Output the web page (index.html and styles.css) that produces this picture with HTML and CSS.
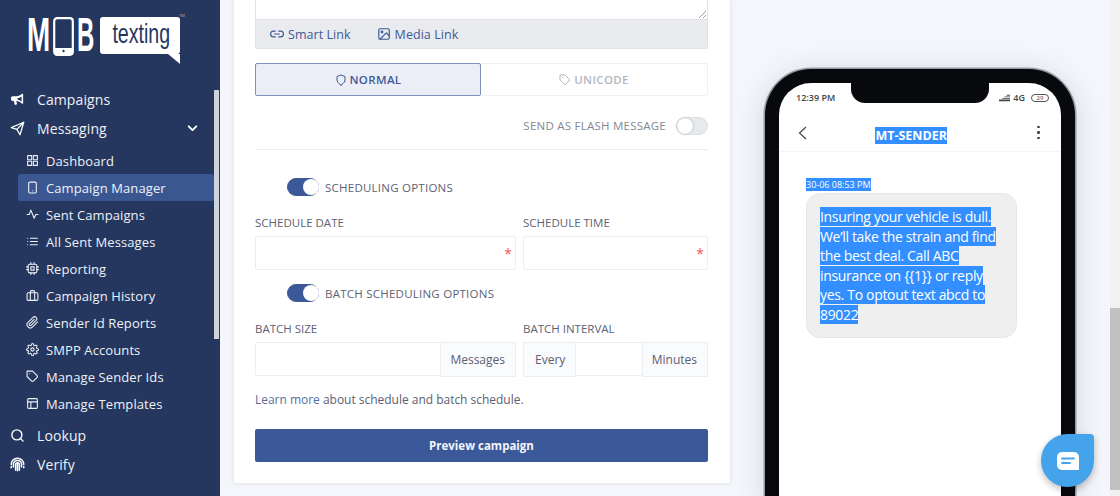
FILE: index.html
```html
<!DOCTYPE html>
<html lang="en">
<head>
    <meta charset="UTF-8">
    <meta name="viewport" content="width=device-width, initial-scale=1.0">
    <title>Campaign Manager</title>
    <link rel="stylesheet" href="styles.css">
</head>
<body>

    <aside class="sidebar">
        <div class="logo">
            <span class="logo-mob logo-m">M</span>
            <svg class="logo-phone" viewBox="0 0 21 39"><rect x="1.2" y="1.2" width="18.6" height="36.6" rx="3" fill="none" stroke="#fff" stroke-width="2.2"/><rect x="2" y="31" width="17" height="6" fill="#fff"/><circle cx="10.5" cy="34" r="1.2" fill="#25375f"/></svg>
            <span class="logo-mob logo-b">B</span>
            <span class="logo-bubble"><span class="logo-word">texting</span></span>
            <span class="logo-tm">TM</span>
        </div>

        <nav class="nav">
            <div class="side-thumb"></div>
            <a class="nav-top"><svg class="icon-top" viewBox="0 0 24 24" fill="#fff"><path d="M21 3.5v15l-1.5.4C17 16 13.5 14.7 10 14.4l1.4 5.3-3.6 1L6 14.2H4.500a3 3 0 0 1-3-3v-1.400a3 3 0 0 1 3-3H10c3.500-.3 7-1.700 9.500-4.500zM18.500 7c-2 1.500-4.300 2.500-6.500 3v2.300c2.200.4 4.500 1.300 6.500 2.800z"/></svg>Campaigns</a>
            <a class="nav-top nav-open"><svg class="icon-top" viewBox="0 0 24 24" fill="none" stroke="#fff" stroke-width="2" stroke-linejoin="round"><path d="M2 10.500 22 2l-6 20-5-8.500zM22 2 11 13.500"/></svg>Messaging<svg class="chevron" viewBox="0 0 24 24" fill="none" stroke="#fff" stroke-width="3.500" stroke-linecap="round" stroke-linejoin="round"><path d="m5 8 7 7 7-7"/></svg></a>

            <div class="nav-sub">
                <a><svg class="icon" viewBox="0 0 24 24"><rect x="3" y="3" width="7.500" height="7.500"/><rect x="13.500" y="3" width="7.500" height="7.500"/><rect x="13.500" y="13.500" width="7.500" height="7.500"/><rect x="3" y="13.500" width="7.500" height="7.500"/></svg>Dashboard</a>
                <a class="active"><svg class="icon" viewBox="0 0 24 24"><rect x="5" y="2" width="14" height="20" rx="2"/><path d="M12 18h.01"/></svg>Campaign Manager</a>
                <a><svg class="icon" viewBox="0 0 24 24"><path d="M22 12h-4l-3 7L9 4l-3 8H2"/></svg>Sent Campaigns</a>
                <a><svg class="icon" viewBox="0 0 24 24"><path d="M8 6h13M8 12h13M8 18h13M3 6h.01M3 12h.01M3 18h.01"/></svg>All Sent Messages</a>
                <a><svg class="icon" viewBox="0 0 24 24"><rect x="4" y="4" width="16" height="16" rx="3"/><rect x="9" y="9" width="6" height="6"/><path d="M9 1v3M15 1v3M9 20v3M15 20v3M20 9h3M20 14h3M1 9h3M1 14h3"/></svg>Reporting</a>
                <a><svg class="icon" viewBox="0 0 24 24"><rect x="2" y="7" width="20" height="14" rx="2"/><path d="M16 21V5a2 2 0 0 0-2-2h-4a2 2 0 0 0-2 2v16"/></svg>Campaign History</a>
                <a><svg class="icon" viewBox="0 0 24 24"><path d="M21.440 11.050l-9.190 9.190a6 6 0 0 1-8.490-8.490l9.190-9.190a4 4 0 0 1 5.660 5.660l-9.200 9.190a2 2 0 0 1-2.830-2.830l8.490-8.480"/></svg>Sender Id Reports</a>
                <a><svg class="icon" viewBox="0 0 24 24"><circle cx="12" cy="12" r="3"/><path d="M19.400 15a1.650 1.650 0 0 0 .33 1.820l.06.06a2 2 0 0 1 0 2.830 2 2 0 0 1-2.830 0l-.06-.06a1.650 1.650 0 0 0-1.820-.33 1.650 1.650 0 0 0-1 1.510V21a2 2 0 0 1-2 2 2 2 0 0 1-2-2v-.09A1.650 1.650 0 0 0 9 19.400a1.650 1.650 0 0 0-1.820.33l-.06.06a2 2 0 0 1-2.830 0 2 2 0 0 1 0-2.830l.06-.06a1.650 1.650 0 0 0 .33-1.820 1.650 1.650 0 0 0-1.510-1H3a2 2 0 0 1-2-2 2 2 0 0 1 2-2h.09A1.650 1.650 0 0 0 4.600 9a1.650 1.650 0 0 0-.33-1.820l-.06-.06a2 2 0 0 1 0-2.830 2 2 0 0 1 2.830 0l.06.06a1.650 1.650 0 0 0 1.820.33H9a1.650 1.650 0 0 0 1-1.510V3a2 2 0 0 1 2-2 2 2 0 0 1 2 2v.09a1.650 1.650 0 0 0 1 1.510 1.650 1.650 0 0 0 1.820-.33l.06-.06a2 2 0 0 1 2.830 0 2 2 0 0 1 0 2.830l-.06.06a1.650 1.650 0 0 0-.33 1.820V9a1.650 1.650 0 0 0 1.510 1H21a2 2 0 0 1 2 2 2 2 0 0 1-2 2h-.09a1.650 1.650 0 0 0-1.510 1z"/></svg>SMPP Accounts</a>
                <a><svg class="icon" viewBox="0 0 24 24"><path d="M20.590 13.410l-7.170 7.170a2 2 0 0 1-2.830 0L2 12V2h10l8.590 8.590a2 2 0 0 1 0 2.820z"/><path d="M7 7h.01"/></svg>Manage Sender Ids</a>
                <a><svg class="icon" viewBox="0 0 24 24"><rect x="3" y="3" width="18" height="18" rx="2"/><path d="M3 9h18M9 21V9"/></svg>Manage Templates</a>
            </div>

            <a class="nav-top nav-lookup"><svg class="icon-top" viewBox="0 0 24 24" fill="none" stroke="#fff" stroke-width="2.200" stroke-linecap="round"><circle cx="11" cy="11" r="8"/><path d="m21 21-4.350-4.350"/></svg>Lookup</a>
            <a class="nav-top"><svg class="icon-top" viewBox="0 0 24 24" fill="none" stroke="#fff" stroke-width="2.400" stroke-linecap="round"><path d="M2 12a10 10 0 0 1 20 0M5.500 16v-4a6.500 6.500 0 0 1 13 0v4M9 21v-9a3 3 0 0 1 6 0v9M12 22V11M2 15v2M22 15v2"/></svg>Verify</a>
        </nav>
    </aside>

    <main class="content">
        <section class="card">
            <div class="textarea-box">
                <div class="textarea-top">
                    <svg class="grip" viewBox="0 0 8 8" fill="none" stroke="#888" stroke-width=".8"><path d="M1 8 8 1M5 8l3-3"/></svg>
                </div>
                <div class="textarea-bar">
                    <a><svg class="bar-icon" viewBox="0 0 24 24"><path d="M15 7h3a5 5 0 0 1 0 10h-3M9 17H6A5 5 0 0 1 6 7h3M8 12h8"/></svg>Smart Link</a>
                    <a><svg class="bar-icon" viewBox="0 0 24 24"><rect x="3" y="3" width="18" height="18" rx="2"/><circle cx="8.500" cy="8.500" r="1.500"/><path d="m21 15-5-5L5 21"/></svg>Media Link</a>
                </div>
            </div>

            <div class="type-tabs">
                <div class="type-tab selected"><svg class="tab-icon" viewBox="0 0 24 24"><path d="M12 22s8-4 8-10V5l-8-3-8 3v7c0 6 8 10 8 10z"/></svg>NORMAL</div>
                <div class="type-tab"><svg class="tab-icon" viewBox="0 0 24 24"><path d="M20.590 13.410l-7.170 7.170a2 2 0 0 1-2.830 0L2 12V2h10l8.590 8.590a2 2 0 0 1 0 2.820z"/><path d="M7 7h.01"/></svg>UNICODE</div>
            </div>

            <div class="flash-row">
                <span>SEND AS FLASH MESSAGE</span>
                <span class="switch"></span>
            </div>

            <div class="switch-row first-switch">
                <span class="switch on"></span>
                <span>SCHEDULING OPTIONS</span>
            </div>

            <div class="form-row">
                <div class="col-left">
                    <label>SCHEDULE DATE</label>
                    <div class="field"><span class="req">*</span></div>
                </div>
                <div class="col-right">
                    <label>SCHEDULE TIME</label>
                    <div class="field"><span class="req">*</span></div>
                </div>
            </div>

            <div class="switch-row second-switch">
                <span class="switch on"></span>
                <span>BATCH SCHEDULING OPTIONS</span>
            </div>

            <div class="form-row">
                <div class="col-left">
                    <label>BATCH SIZE</label>
                    <div class="field group">
                        <div class="grow"></div>
                        <span class="addon addon-end">Messages</span>
                    </div>
                </div>
                <div class="col-right">
                    <label>BATCH INTERVAL</label>
                    <div class="field group">
                        <span class="addon addon-start">Every</span>
                        <div class="grow"></div>
                        <span class="addon addon-end">Minutes</span>
                    </div>
                </div>
            </div>

            <p class="learn"><a>Learn more</a> about schedule and batch schedule.</p>

            <button class="preview-btn">Preview campaign</button>
        </section>
    </main>

    <section class="preview">
        <div class="phone">
            <div class="notch"></div>
            <div class="status">
                <span class="clock">12:39 PM</span>
                <span class="status-right">
                    <svg class="signal" viewBox="0 0 14 8" fill="#444"><path d="M10 0h4v1h-4zM7 2h7v1H7zM4 4h10v1H4zM0 6h14v2H0z"/></svg>
                    <span>4G</span>
                    <span class="battery">29</span>
                </span>
            </div>
            <div class="phone-head">
                <svg class="back" viewBox="0 0 9 14" fill="none" stroke="#444" stroke-width="1.200"><path d="M8 1 1.500 7 8 13"/></svg>
                <span class="sender"><span class="sel">MT-SENDER</span></span>
                <span class="dots"><i></i><i></i><i></i></span>
            </div>
            <div class="thread">
                <div class="stamp"><span class="sel">30-06 08:53 PM</span></div>
                <div class="bubble"><span class="sel">Insuring your vehicle is dull. We’ll take the strain and find the best deal. Call ABC insurance on {{1}} or reply yes. To optout text abcd to 89022</span></div>
            </div>
        </div>
    </section>

    <div class="page-scroll"><div class="page-thumb"></div></div>

    <button class="chat-btn">
        <svg viewBox="0 0 22 18"><path d="M5 0h12a5 5 0 0 1 5 5v13H5a5 5 0 0 1-5-5V5a5 5 0 0 1 5-5z" fill="#fff"/><path d="M5 6.500h12M5 11h8" stroke="#45a3ec" stroke-width="1.800" stroke-linecap="round"/></svg>
    </button>

</body>
</html>
```

FILE: styles.css
```css
* {
    box-sizing: border-box;
}

body {
    margin: 0;
    height: 496px;
    overflow: hidden;
    display: flex;
    background-color: #f4f6fb;
    font-family: "Open Sans", "Noto Sans", sans-serif;
    color: #5a6072;
}

/* sidebar */

.sidebar {
    width: 220px;
    flex-shrink: 0;
    background-color: #25375f;
    color: #eef1f7;
}

.logo {
    height: 85px;
    padding: 17px 0 0 27px;
    display: flex;
    align-items: flex-start;
    position: relative;
}

.logo-mob {
    display: block;
    height: 36px;
    color: #fff;
    font-family: "Liberation Sans", sans-serif;
    font-size: 48px;
    font-weight: 700;
    line-height: 36px;
    transform-origin: left center;
}

.logo-m {
    width: 26px;
    transform: scaleX(.58);
}

.logo-b {
    width: 23px;
    transform: scaleX(.5);
}

.logo-phone {
    width: 21px;
    height: 39px;
    margin-right: 3px;
    flex-shrink: 0;
}

.logo-bubble {
    width: 80px;
    height: 37px;
    background-color: #fff;
    border-radius: 3px;
    color: #25375f;
    font-family: "Liberation Sans", sans-serif;
    font-size: 28px;
    line-height: 33px;
    text-align: center;
    position: relative;
}

.logo-word {
    display: inline-block;
    transform: scaleX(.7);
}

.logo-bubble::after {
    content: "";
    position: absolute;
    right: 0;
    bottom: -10px;
    border-top: 10px solid #fff;
    border-left: 12px solid transparent;
}

.logo-tm {
    position: absolute;
    left: 179px;
    top: 13px;
    font-size: 4px;
    color: #aeb6c8;
}

.nav {
    position: relative;
}

.side-thumb {
    position: absolute;
    left: 214px;
    top: 5px;
    width: 5px;
    height: 249px;
    background-color: #ced2da;
}

.nav a {
    display: flex;
    align-items: center;
}

.nav-top {
    height: 29px;
    padding-left: 10px;
    font-size: 14px;
    letter-spacing: .1px;
}

.icon-top {
    width: 15px;
    height: 15px;
    margin-right: 12px;
    flex-shrink: 0;
}

.chevron {
    width: 13px;
    height: 13px;
    margin-left: 79px;
}

.nav-sub {
    padding: 4px 0 4px 18px;
}

.nav-sub a {
    width: 196px;
    height: 27px;
    padding-left: 8px;
    border-radius: 2px;
    font-size: 13px;
    letter-spacing: .1px;
}

.nav-sub a.active {
    background-color: #3a5792;
}

.icon {
    width: 13px;
    height: 13px;
    margin-right: 7px;
    flex-shrink: 0;
    fill: none;
    stroke: #eef1f7;
    stroke-width: 2;
    stroke-linecap: round;
    stroke-linejoin: round;
}

/* form card */

.content {
    width: 510px;
    padding-left: 14px;
    flex-shrink: 0;
}

.card {
    width: 496px;
    height: 483px;
    padding: 0 22px 0 21px;
    background-color: #fff;
    box-shadow: 0 0 4px rgba(40, 50, 80, .14);
    font-size: 12px;
}

.textarea-box {
    border: 1px solid #dfe3e9;
    border-top: 0;
    border-radius: 0 0 2px 2px;
}

.textarea-top {
    height: 19px;
    position: relative;
}

.grip {
    position: absolute;
    right: 1px;
    bottom: 1px;
    width: 8px;
    height: 8px;
}

.textarea-bar {
    height: 29px;
    padding-left: 14px;
    display: flex;
    align-items: center;
    gap: 26px;
    border-top: 1px solid #dfe3e9;
    background-color: #e9ebef;
    color: #3e5a96;
    font-size: 12.5px;
    letter-spacing: .05px;
}

.textarea-bar a {
    display: flex;
    align-items: center;
}

.bar-icon,
.tab-icon {
    fill: none;
    stroke: currentColor;
    stroke-width: 2;
    stroke-linecap: round;
    stroke-linejoin: round;
}

.bar-icon {
    width: 14px;
    height: 14px;
    margin-right: 4px;
}

.type-tabs {
    margin-top: 14px;
    height: 33px;
    display: flex;
    border: 1px solid #eef0f4;
    border-radius: 2px;
}

.type-tab {
    flex: 1;
    display: flex;
    align-items: center;
    justify-content: center;
    color: #b3b7c0;
    font-size: 11.5px;
    font-weight: 600;
    letter-spacing: .35px;
}

.type-tab.selected {
    flex: 0 0 226px;
    margin: -1px 0 -1px -1px;
    background-color: #ebeef6;
    border: 1px solid #7d90bb;
    border-radius: 2px;
    color: #3e5a96;
}

.tab-icon {
    width: 12px;
    height: 12px;
    margin-right: 3px;
}

.flash-row {
    height: 54px;
    padding-top: 6px;
    display: flex;
    align-items: center;
    justify-content: flex-end;
    gap: 10px;
    border-bottom: 1px solid #e9ebef;
    color: #84888f;
    letter-spacing: .24px;
    font-size: 11.500px;
}

.switch {
    width: 32px;
    height: 18px;
    flex-shrink: 0;
    position: relative;
    border-radius: 9px;
    background-color: #e7eaec;
    border: 1px solid #dcdfe3;
}

.switch::after {
    content: "";
    position: absolute;
    left: 0;
    top: 0;
    width: 16px;
    height: 16px;
    border-radius: 50%;
    background-color: #fff;
    box-shadow: 0 0 2px rgba(0, 0, 0, .35);
}

.switch.on {
    background-color: #3b5998;
    border-color: #3b5998;
}

.switch.on::after {
    left: 15px;
    box-shadow: none;
}

.switch-row {
    padding-left: 32px;
    display: flex;
    align-items: center;
    gap: 6px;
    font-size: 11.500px;
    letter-spacing: .24px;
    color: #5d6274;
}

.first-switch {
    margin-top: 28px;
    height: 18px;
}

.second-switch {
    margin-top: 14px;
    height: 18px;
}

.form-row {
    margin-top: 18px;
    display: flex;
    gap: 7px;
}

.col-left {
    width: 261px;
}

.col-right {
    flex: 1;
}

.form-row label {
    display: block;
    height: 17px;
    margin-bottom: 5px;
    font-size: 11.500px;
    line-height: 17px;
    color: #5d6274;
}

.field {
    height: 34px;
    position: relative;
    border: 1px solid #eceef2;
    border-radius: 2px;
}

.req {
    position: absolute;
    right: 3px;
    top: 10px;
    color: #f0555f;
    font-size: 14px;
    line-height: 14px;
}

.group {
    display: flex;
}

.grow {
    flex: 1;
}

.addon {
    height: 35px;
    margin: -1px 0 -2px;
    display: flex;
    align-items: center;
    background-color: #fafbfc;
    border: 1px solid #eceef2;
    font-size: 12px;
}

.addon-end {
    padding: 0 10px 0 9px;
    margin-right: -1px;
}

.addon-start {
    padding: 0 10px 0 11px;
    margin-left: -1px;
}

.learn {
    margin: 15px 0 0;
    height: 18px;
    line-height: 18px;
    font-size: 12px;
    letter-spacing: -.02px;
}

.learn a {
    color: #56709f;
}

.preview-btn {
    display: block;
    width: 100%;
    height: 33px;
    margin-top: 20px;
    padding: 0;
    border: 0;
    border-radius: 2px;
    background-color: #3b5998;
    color: #f3f5fa;
    font-family: inherit;
    font-size: 11.500px;
    font-weight: 700;
}

/* phone preview */

.preview {
    width: 380px;
    height: 496px;
    padding: 69px 0 0 35px;
    flex-shrink: 0;
    overflow: hidden;
}

.phone {
    width: 310px;
    height: 427px;
    position: relative;
    background-color: #fff;
    border: 14px solid #08090d;
    border-bottom: 0;
    border-radius: 46px 46px 0 0;
    box-shadow: 0 0 0 1.500px #9a9a9e, 0 4px 28px rgba(60, 70, 90, .2);
}

.notch {
    position: absolute;
    left: 72px;
    top: -1px;
    width: 138px;
    height: 21px;
    background-color: #08090d;
    border-radius: 0 0 14px 14px;
}

.status {
    height: 31px;
    padding: 0 12px 2px 17px;
    display: flex;
    justify-content: space-between;
    align-items: center;
    font-size: 9px;
    font-weight: 600;
    color: #444;
}

.status-right {
    display: flex;
    align-items: center;
    gap: 3px;
}

.signal {
    width: 11px;
    height: 8px;
}

.battery {
    width: 18px;
    height: 8px;
    border: 1px solid #555;
    border-radius: 4px;
    font-size: 6px;
    line-height: 6px;
    font-weight: 400;
    text-align: center;
    margin-left: 3px;
}

.phone-head {
    height: 38px;
    padding: 0 21px 0 19px;
    display: flex;
    align-items: center;
    justify-content: space-between;
    border-bottom: 1px solid #f5f5f5;
}

.back {
    width: 9px;
    height: 14px;
}

.sender {
    font-size: 12.500px;
    font-weight: 700;
    margin: 6px 22px 0 0;
}

.sel {
    background-color: #338fff;
    color: #fff;
}

.dots {
    display: flex;
    flex-direction: column;
    gap: 3px;
}

.dots i {
    width: 2.500px;
    height: 2.500px;
    border-radius: 50%;
    background-color: #444;
}

.thread {
    padding: 27px 0 0 27px;
}

.stamp {
    height: 14px;
    font-size: 9px;
    line-height: 12px;
}

.bubble {
    width: 211px;
    height: 145px;
    padding: 13px 13px 0;
    background-color: #efefef;
    border: 1px solid #e7e7e7;
    border-radius: 14px;
    font-size: 14px;
    letter-spacing: -.32px;
    line-height: 19.500px;
}

.page-scroll {
    position: absolute;
    left: 1110px;
    top: 0;
    width: 10px;
    height: 496px;
    background-color: #f1f1f1;
}

.page-thumb {
    margin-top: 308px;
    height: 182px;
    background-color: #c1c1c1;
}

.chat-btn {
    position: absolute;
    left: 1041px;
    top: 434px;
    width: 53px;
    height: 53px;
    padding: 0;
    display: flex;
    align-items: center;
    justify-content: center;
    border: 0;
    border-radius: 50% 4px 50% 50%;
    background-color: #45a3ec;
    box-shadow: 0 3px 7px rgba(0, 0, 0, .25);
}

.chat-btn svg {
    width: 22px;
    height: 18px;
}
```
